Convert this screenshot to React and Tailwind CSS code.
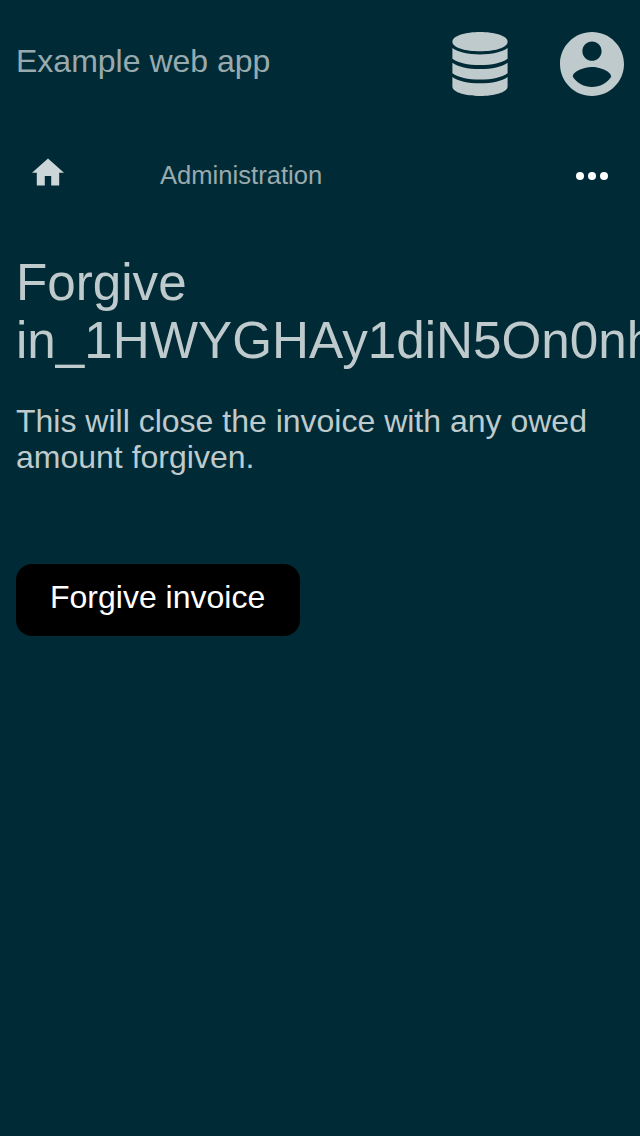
export default function App() {
  return (
    <div className="h-[1136px] w-[640px] overflow-hidden bg-[#002b36] font-['Liberation_Sans',Arial,sans-serif] text-[#bfcacd]">
      <header className="flex h-32 items-center justify-between px-4">
        <span className="pb-1.5 text-[32px] leading-9 text-[#99aaaf]">Example web app</span>
        <div className="flex gap-[52px]">
          <svg viewBox="0 0 56 64" className="h-16 w-14" fill="#bfcacd">
            <path d="M28 0C42 0 55.600 3.500 55.600 9.700S42 19.200 28 19.200 .4 15.900 .4 9.700 14 0 28 0z" />
            <path d="M.4 16.100C6 20.300 16 22.400 28 22.400s22-2.100 27.600-6.300V26.800C50 31 40 33.100 28 33.100S6 31 .4 26.800z" />
            <path d="M.4 30.700C6 34.900 16 37 28 37s22-2.100 27.600-6.300V41.200C50 45.400 40 47.500 28 47.500S6 45.400 .4 41.200z" />
            <path d="M.4 45C6 49.200 16 51.300 28 51.300s22-2.100 27.600-6.300V54.500C55.600 60.500 42 64 28 64S.4 60.500 .4 54.500z" />
          </svg>
          <svg viewBox="2 2 20 20" className="h-16 w-16" fill="#bfcacd">
            <path d="M12 2C6.480 2 2 6.480 2 12s4.480 10 10 10 10-4.480 10-10S17.520 2 12 2zm0 3c1.660 0 3 1.340 3 3s-1.340 3-3 3-3-1.340-3-3 1.340-3 3-3zm0 14.200c-2.500 0-4.710-1.280-6-3.220.03-1.990 4-3.080 6-3.080 1.990 0 5.970 1.090 6 3.080-1.290 1.940-3.500 3.220-6 3.220z" />
          </svg>
        </div>
      </header>
      <nav className="flex h-24 items-center px-8">
        <svg viewBox="2 2.75 20 17.5" className="mb-2 h-7 w-8" fill="#ccd5d7">
          <path d="M10 20v-6h4v6h5v-8h3L12 3 2 12h3v8z" />
        </svg>
        <span className="ml-24 pb-0.5 text-[25.6px] leading-[30px] text-[#99aaaf]">Administration</span>
        <svg viewBox="0 0 32 8" className="ml-auto h-2 w-8" fill="#fff">
          <circle cx="4" cy="4" r="4" /><circle cx="16" cy="4" r="4" /><circle cx="28" cy="4" r="4" />
        </svg>
      </nav>
      <main className="px-4 pt-[30px]">
        <h1 className="text-[51.2px] leading-[58px]">Forgive in_1HWYGHAy1diN5On0nh</h1>
        <p className="mt-[33px] text-[32px] leading-9">This will close the invoice with any owed amount forgiven.</p>
        <button className="mt-[89px] flex h-[72px] w-[284px] rounded-2xl bg-black pl-[34px] pt-[15px] text-[32px] leading-9 text-white">Forgive invoice</button>
      </main>
    </div>
  );
}
